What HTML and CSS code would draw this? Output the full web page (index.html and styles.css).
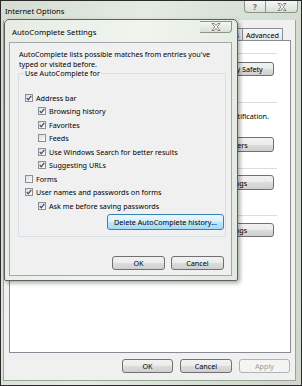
FILE: index.html
```html
<!DOCTYPE html>
<html lang="en">
<head>
  <meta charset="UTF-8" />
  <title>Internet Options</title>
  <link rel="stylesheet" href="styles.css">
</head>
<body>
  <div class="window">
    <div class="titlebar">
      <span class="title">Internet Options</span>
      <div class="caption-btns">
        <span class="cap help">?</span>
        <span class="cap close">
          <svg width="10" height="8" viewBox="0 0 10 8"><path d="M1 0.5 H3.3 L5 2.6 L6.7 0.5 H9 L6.2 4 L9 7.5 H6.7 L5 5.4 L3.3 7.5 H1 L3.8 4 Z" fill="#fff" stroke="#6a6a6a" stroke-width="0.8" stroke-linejoin="round"/></svg>
        </span>
      </div>
    </div>
    <div class="client">
      <div class="tabs">
        <span class="tab">Connections</span>
        <span class="tab">Programs</span>
        <span class="tab">Advanced</span>
      </div>
      <div class="panel">
        <div class="sep sep-1"></div>
        <button class="btn side-btn btn-safety">Family Safety</button>
        <div class="sep sep-2"></div>
        <div class="panel-text"><span>identification.</span></div>
        <button class="btn side-btn btn-pub">Publishers</button>
        <div class="sep sep-3"></div>
        <button class="btn side-btn btn-set1">Settings</button>
        <div class="sep sep-4"></div>
        <button class="btn side-btn btn-set2">Settings</button>
      </div>
      <div class="button-row">
        <button class="btn">OK</button>
        <button class="btn">Cancel</button>
        <button class="btn" disabled>Apply</button>
      </div>
    </div>

    <div class="dialog">
      <div class="dlg-titlebar">
        <span class="title">AutoComplete Settings</span>
        <span class="cap close dlg-close">
          <svg width="10" height="8" viewBox="0 0 10 8"><path d="M1 0.5 H3.3 L5 2.6 L6.7 0.5 H9 L6.2 4 L9 7.5 H6.7 L5 5.4 L3.3 7.5 H1 L3.8 4 Z" fill="#fff" stroke="#6a6a6a" stroke-width="0.8" stroke-linejoin="round"/></svg>
        </span>
      </div>
      <div class="dlg-client">
        <p class="intro">AutoComplete lists possible matches from entries you've<br>typed or visited before.</p>
        <fieldset class="group">
          <legend>Use AutoComplete for</legend>
          <div class="check on">Address bar</div>
          <div class="check on sub">Browsing history</div>
          <div class="check on sub">Favorites</div>
          <div class="check sub">Feeds</div>
          <div class="check on sub">Use Windows Search for better results</div>
          <div class="check on sub">Suggesting URLs</div>
          <div class="check">Forms</div>
          <div class="check on">User names and passwords on forms</div>
          <div class="check on sub">Ask me before saving passwords</div>
          <div class="delete-row">
            <button class="btn btn-focus">Delete AutoComplete history...</button>
          </div>
        </fieldset>
        <div class="dlg-buttons">
          <button class="btn">OK</button>
          <button class="btn">Cancel</button>
        </div>
      </div>
    </div>
  </div>
</body>
</html>
```

FILE: styles.css
```css
body {
  margin: 0;
  font-family: 'Noto Sans', 'Open Sans', sans-serif;
  font-size: 7.2px;
  color: #000;
  background: #fff;
}
.window {
  position: relative;
  width: 302px;
  height: 386px;
  box-sizing: border-box;
  border: 1px solid #2a2a2a;
  background: linear-gradient(100deg, #d4ddd2 0%, #e4ebe2 40%, #d6e0d3 70%, #cdd8ca 100%);
  display: flex;
  flex-direction: column;
  overflow: hidden;
}
.titlebar {
  height: 19px;
  display: flex;
  justify-content: space-between;
  align-items: flex-start;
  padding: 0 3px 0 4px;
}
.titlebar .title {
  margin-top: 5px;
  font-size: 7.6px;
}
.caption-btns {
  display: flex;
}
.cap {
  height: 12px;
  box-sizing: border-box;
  border: 1px solid #8c948c;
  border-top: none;
  background: linear-gradient(#f3f6f2, #d9e0d7);
  display: flex;
  align-items: center;
  justify-content: center;
  color: #6a6a6a;
}
.cap.help {
  width: 22px;
  border-radius: 0 0 0 4px;
  font-size: 8px;
  font-weight: bold;
}
.cap.close {
  width: 32px;
  border-left: none;
  border-radius: 0 0 4px 0;
}
.client {
  flex: 1;
  margin: 0 5px 4px 2px;
  padding: 8px 4px 0 5px;
  background: #f0f0f0;
  border: 1px solid #9aa59a;
  border-top: none;
  display: flex;
  flex-direction: column;
}
.tabs {
  height: 12px;
  display: flex;
  justify-content: flex-end;
  padding-right: 8px;
}
.tab {
  height: 12px;
  box-sizing: border-box;
  padding: 1px 3px 0;
  border: 1px solid #898c95;
  border-bottom: none;
  border-left: none;
  background: linear-gradient(#f7f7f7, #e6e6e6);
  font-size: 7.2px;
  line-height: 10px;
}
.tab:first-child {
  border-left: 1px solid #898c95;
}
.panel {
  height: 313px;
  box-sizing: border-box;
  background: #fff;
  border: 1px solid #898c95;
  padding-right: 13px;
  overflow: hidden;
}
.sep {
  height: 1px;
  background: #d5dfe5;
}
.sep-1 { margin-top: 12px; }
.sep-2 { margin-top: 26px; }
.sep-3 { margin-top: 16px; }
.sep-4 { margin-top: 25px; }
.panel-text {
  margin-top: 8px;
  height: 10px;
  line-height: 10px;
  display: flex;
  justify-content: flex-end;
  padding-right: 8px;
  white-space: nowrap;
}
.btn {
  font-family: inherit;
  font-size: 7.2px;
  color: #000;
  height: 14px;
  width: 51px;
  padding: 0;
  box-sizing: border-box;
  border: 1px solid #707070;
  border-radius: 3px;
  background: linear-gradient(#f2f2f2 0%, #ebebeb 50%, #dddddd 50%, #cfcfcf 100%);
}
.btn:disabled {
  color: #9b9b9b;
  border-color: #adb2b5;
  background: #f4f4f4;
}
.side-btn {
  display: block;
  margin-left: auto;
  margin-right: 3px;
}
.btn-safety { width: 67px; margin-top: 8px; }
.btn-pub { width: 88px; margin-top: 16px; height: 15px; }
.btn-set1 { width: 81px; margin-top: 6px; height: 15px; }
.btn-set2 { width: 81px; margin-top: 7px; }
.button-row {
  margin-top: 6px;
  padding-right: 1px;
  display: flex;
  justify-content: flex-end;
  gap: 7px;
}
.button-row .btn:nth-child(2) { width: 52px; }

.dialog {
  position: absolute;
  left: 3px;
  top: 18px;
  width: 234px;
  height: 262px;
  box-sizing: border-box;
  border: 1px solid #5e625e;
  border-radius: 5px 5px 2px 2px;
  background: linear-gradient(100deg, #e6ece4 0%, #f0f4ef 50%, #e2e9e0 100%);
  box-shadow: 2px 2px 4px rgba(0, 0, 0, 0.35);
  display: flex;
  flex-direction: column;
  padding: 0 5px 4px 4px;
}
.dlg-titlebar {
  height: 22px;
  display: flex;
  justify-content: space-between;
  align-items: flex-start;
}
.dlg-titlebar .title {
  margin: 7px 0 0 3px;
  font-size: 7.8px;
}
.dlg-close {
  border-left: 1px solid #8c948c;
  border-radius: 0 0 4px 4px;
  margin-top: 1px;
  border-top: 1px solid #8c948c;
}
.dlg-client {
  flex: 1;
  background: #f0f0f0;
  border: 1px solid #a0a8ad;
  display: flex;
  flex-direction: column;
}
.intro {
  margin: 0;
  padding: 6px 0 0 9px;
  line-height: 10px;
}
.group {
  margin: 0 5px 0 8px;
  padding: 14px 1px 6px 6px;
  border: 1px solid #d5dfe5;
  border-radius: 2px;
}
.group legend {
  padding: 0 1px;
  margin-left: -1px;
  line-height: 8px;
}
.check {
  height: 13.5px;
  line-height: 10px;
  display: flex;
  align-items: center;
  gap: 3px;
  white-space: nowrap;
}
.check::before {
  content: '';
  width: 8px;
  height: 8px;
  box-sizing: border-box;
  border: 1px solid #8e8f8f;
  background: linear-gradient(135deg, #dcdcdc, #fdfdfd);
  flex: none;
}
.check.on::before {
  background: url("data:image/svg+xml,%3Csvg xmlns='http://www.w3.org/2000/svg' width='6' height='6' viewBox='0 0 6 6'%3E%3Cpath d='M0.8 3.1 L2.3 4.8 L5.3 0.8' fill='none' stroke='%233b5279' stroke-width='1.3'/%3E%3C/svg%3E") center / 6px 6px no-repeat, linear-gradient(135deg, #dcdcdc, #fdfdfd);
}
.check.sub {
  padding-left: 13px;
}
.delete-row {
  display: flex;
  justify-content: flex-end;
  margin-top: 1px;
}
.btn-focus {
  width: 117px;
  height: 16px;
  border-color: #3c7fb1;
  background: linear-gradient(#eaf6fd 0%, #d9f0fc 50%, #bee6fd 50%, #a7d9f5 100%);
}
.dlg-buttons {
  margin-top: 19px;
  padding-right: 7px;
  display: flex;
  justify-content: flex-end;
  gap: 6px;
}
.dlg-buttons .btn {
  width: 53px;
}
```
